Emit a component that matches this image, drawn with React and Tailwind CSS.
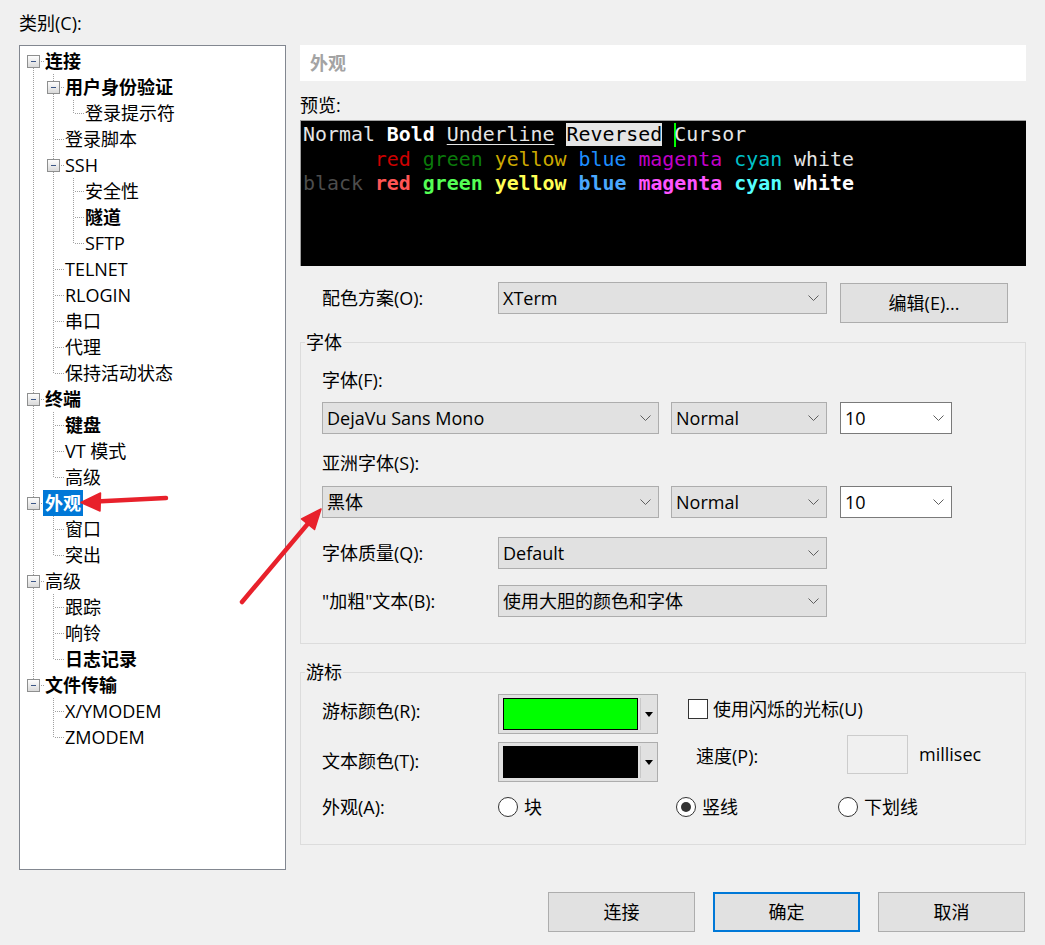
import React from 'react';

const tree = [
  { t: '连接', b: true, c: [
    { t: '用户身份验证', b: true, c: [{ t: '登录提示符' }] },
    { t: '登录脚本' },
    { t: 'SSH', c: [{ t: '安全性' }, { t: '隧道', b: true }, { t: 'SFTP' }] },
    { t: 'TELNET' }, { t: 'RLOGIN' }, { t: '串口' }, { t: '代理' }, { t: '保持活动状态' },
  ] },
  { t: '终端', b: true, c: [{ t: '键盘', b: true }, { t: 'VT 模式' }, { t: '高级' }] },
  { t: '外观', b: true, sel: true, c: [{ t: '窗口' }, { t: '突出' }] },
  { t: '高级', c: [{ t: '跟踪' }, { t: '响铃' }, { t: '日志记录', b: true }] },
  { t: '文件传输', b: true, c: [{ t: 'X/YMODEM' }, { t: 'ZMODEM' }] },
];

function flatten(nodes, level, anc, out) {
  nodes.forEach((n, i) => {
    const isLast = i === nodes.length - 1;
    const isFirstRoot = level === 0 && i === 0;
    out.push({ n, level, anc, isLast, isFirstRoot });
    if (n.c) flatten(n.c, level + 1, [...anc, isLast], out);
  });
  return out;
}

const LINE = '#a0a0a0';

function VCell() {
  return (
    <svg width="20" height="26" className="block shrink-0" shapeRendering="crispEdges">
      <line x1="8.5" y1="0" x2="8.5" y2="26" stroke={LINE} strokeDasharray="1 1" />
    </svg>
  );
}

function EmptyCell() {
  return <div className="w-[20px] h-[26px] shrink-0" />;
}

function NodeCell({ top, bottom, expander }) {
  return (
    <svg width="20" height="26" className="block shrink-0" shapeRendering="crispEdges">
      <defs>
        <linearGradient id="exg" x1="0" y1="0" x2="0" y2="1">
          <stop offset="0" stopColor="#ffffff" />
          <stop offset="1" stopColor="#d8d8d8" />
        </linearGradient>
      </defs>
      {top && <line x1="8.5" y1="0" x2="8.5" y2="14" stroke={LINE} strokeDasharray="1 1" />}
      {bottom && <line x1="8.5" y1="14" x2="8.5" y2="26" stroke={LINE} strokeDasharray="1 1" />}
      <line x1="10" y1="13.5" x2="20" y2="13.5" stroke={LINE} strokeDasharray="1 1" />
      {expander && (
        <g>
          <rect x="2.5" y="7.5" width="12" height="12" fill="url(#exg)" stroke="#8e8f8f" />
          <rect x="6" y="13" width="5" height="1" fill="#3b5686" />
        </g>
      )}
    </svg>
  );
}

function Tree() {
  const rows = flatten(tree, 0, [], []);
  return (
    <div className="flex flex-col pl-[5px]">
      {rows.map((r, idx) => (
        <div key={idx} className="flex h-[26px] items-center">
          {r.anc.map((last, k) => (last ? <EmptyCell key={k} /> : <VCell key={k} />))}
          <NodeCell top={!r.isFirstRoot} bottom={!r.isLast} expander={!!r.n.c} />
          <span
            className={`ml-[-2px] h-[26px] px-[2px] leading-[26px] whitespace-nowrap ${r.n.b ? 'font-bold' : ''} ${r.n.sel ? 'bg-[#0078d7] text-white' : 'text-black'}`}
          >
            {r.n.t}
          </span>
        </div>
      ))}
    </div>
  );
}

function Chevron() {
  return (
    <svg width="11" height="7" className="block shrink-0">
      <polyline points="0.5,0.5 5.5,5.5 10.5,0.5" fill="none" stroke="#5f5f5f" strokeWidth="1" />
    </svg>
  );
}

function Combo({ className, text, white }) {
  return (
    <div
      className={`flex h-[32px] shrink-0 items-center justify-between border pl-[4px] pr-[7px] ${white ? 'border-[#7a7a7a] bg-white' : 'border-[#adadad] bg-[#e1e1e1]'} ${className}`}
    >
      <span className="whitespace-nowrap leading-[24px]">{text}</span>
      <Chevron />
    </div>
  );
}

function ColorPick({ swatch }) {
  return (
    <div className="flex h-[40px] w-[160px] shrink-0 border border-[#adadad] bg-[#e1e1e1] pl-[4px] pt-[3px] pb-[3px]">
      <div className={`h-[32px] w-[135px] border border-black ${swatch}`} />
      <div className="ml-[2px] h-full w-[1px] bg-[#c8c8c8]" />
      <div className="flex flex-1 items-center justify-center">
        <svg width="8" height="5" className="block">
          <polygon points="0,0 8,0 4,5" fill="#000" />
        </svg>
      </div>
    </div>
  );
}

function Radio({ checked }) {
  return (
    <div className="flex h-[20px] w-[20px] shrink-0 items-center justify-center rounded-full border border-[#333333] bg-white">
      {checked && <div className="h-[10px] w-[10px] rounded-full bg-[#333333]" />}
    </div>
  );
}

function Btn({ children, primary, className }) {
  return (
    <div
      className={`flex h-[40px] items-center justify-center bg-[#e1e1e1] ${primary ? 'border-2 border-[#0078d7]' : 'border border-[#adadad]'} ${className}`}
    >
      {children}
    </div>
  );
}

function Preview() {
  return (
    <div className="h-[146px] overflow-hidden border-t border-l border-[#a0a0a0] bg-black pl-[2px] pt-[2px] font-['DejaVu_Sans_Mono',monospace] text-[19.9px] leading-[24.5px] whitespace-pre text-[#e5e5e5]">
      <div>
        <span>Normal </span>
        <span className="font-bold text-white">Bold</span>
        <span> </span>
        <span className="underline underline-offset-[3px]">Underline</span>
        <span> </span>
        <span className="bg-[#e5e5e5] text-black">Reversed</span>
        <span> </span>
        <span className="inline-block h-[24px] w-[2px] mr-[-2px] align-top bg-[#00ff00]" />
        <span>Cursor</span>
      </div>
      <div>
        <span>      </span>
        <span className="text-[#cd0000]">red</span> <span className="text-[#0b7a0b]">green</span>{' '}
        <span className="text-[#cdaa00]">yellow</span> <span className="text-[#1e8fff]">blue</span>{' '}
        <span className="text-[#c000c8]">magenta</span> <span className="text-[#00c0c8]">cyan</span>{' '}
        <span className="text-[#e5e5e5]">white</span>
      </div>
      <div>
        <span className="text-[#4d4d4d]">black</span>{' '}
        <span className="font-bold text-[#ff5555]">red</span> <span className="font-bold text-[#55ff55]">green</span>{' '}
        <span className="font-bold text-[#ffff55]">yellow</span> <span className="font-bold text-[#4aa8ff]">blue</span>{' '}
        <span className="font-bold text-[#ff55ff]">magenta</span> <span className="font-bold text-[#55ffff]">cyan</span>{' '}
        <span className="font-bold text-white">white</span>
      </div>
    </div>
  );
}

export default function App() {
  return (
    <div className="relative h-[945px] w-[1045px] overflow-hidden bg-[#f0f0f0] font-['Open_Sans','Noto_Sans_CJK_SC',sans-serif] text-[18px] text-black">
      <div className="flex pl-[19px]">
        {/* left */}
        <div className="flex w-[267px] shrink-0 flex-col">
          <div className="flex h-[45px] items-center leading-[24px]">类别(C):</div>
          <div className="h-[825px] border border-[#828790] bg-white pt-[2px]">
            <Tree />
          </div>
        </div>
        {/* right */}
        <div className="ml-[14px] flex w-[726px] shrink-0 flex-col pt-[45px]">
          <div className="flex h-[36px] items-center bg-white pl-[10px] font-bold text-[#a3a3a3]">外观</div>
          <div className="h-[39px] pt-[12px] leading-[24px]">预览:</div>
          <Preview />
          <div className="mt-[16px] flex items-start">
            <div className="flex h-[32px] w-[198px] shrink-0 items-center pl-[22px]">配色方案(O):</div>
            <Combo className="w-[329px]" text="XTerm" />
            <Btn className="ml-[13px] mt-[1px] w-[168px]">编辑(E)...</Btn>
          </div>

          <fieldset className="m-0 mt-[7px] border border-[#dcdcdc] p-0">
            <legend className="ml-[4px] px-[1px] leading-[24px]">字体</legend>
            <div className="pl-[21px] pt-[14px] pb-[26px]">
              <div className="h-[24px] leading-[24px]">字体(F):</div>
              <div className="mt-[10px] flex">
                <Combo className="w-[337px]" text="DejaVu Sans Mono" />
                <Combo className="ml-[12px] w-[156px]" text="Normal" />
                <Combo className="ml-[13px] w-[112px]" text="10" white />
              </div>
              <div className="mt-[17px] h-[24px] leading-[24px]">亚洲字体(S):</div>
              <div className="mt-[11px] flex">
                <Combo className="w-[337px]" text="黑体" />
                <Combo className="ml-[12px] w-[156px]" text="Normal" />
                <Combo className="ml-[13px] w-[112px]" text="10" white />
              </div>
              <div className="mt-[19px] flex items-center">
                <div className="w-[176px] shrink-0">字体质量(Q):</div>
                <Combo className="w-[329px]" text="Default" />
              </div>
              <div className="mt-[16px] flex items-center">
                <div className="w-[176px] shrink-0">"加粗"文本(B):</div>
                <Combo className="w-[329px]" text="使用大胆的颜色和字体" />
              </div>
            </div>
          </fieldset>

          <fieldset className="m-0 mt-[16px] border border-[#dcdcdc] p-0">
            <legend className="ml-[4px] px-[1px] leading-[24px]">游标</legend>
            <div className="pl-[21px] pt-[10px] pb-[25px]">
              <div className="flex items-start">
                <div className="flex flex-col">
                  <div className="flex h-[40px] items-center">
                    <div className="w-[176px] shrink-0 pb-[6px]">游标颜色(R):</div>
                    <ColorPick swatch="bg-[#00ff00]" />
                  </div>
                  <div className="mt-[8px] flex h-[40px] items-center">
                    <div className="w-[176px] shrink-0 pb-[2px]">文本颜色(T):</div>
                    <ColorPick swatch="bg-black" />
                  </div>
                </div>
                <div className="ml-[30px] flex flex-col">
                  <div className="mt-[3px] flex h-[24px] items-center">
                    <div className="h-[20px] w-[20px] shrink-0 border border-[#333333] bg-white" />
                    <span className="ml-[5px] whitespace-nowrap">使用闪烁的光标(U)</span>
                  </div>
                  <div className="mt-[14px] flex items-center">
                    <span className="ml-[8px] w-[151px] shrink-0 pt-[3px]">速度(P):</span>
                    <div className="h-[39px] w-[61px] shrink-0 border border-[#cccccc] bg-[#f0f0f0]" />
                    <span className="ml-[11px]">millisec</span>
                  </div>
                </div>
              </div>
              <div className="mt-[13px] flex h-[24px] items-center">
                <div className="w-[176px] shrink-0">外观(A):</div>
                <div className="flex w-[178px] shrink-0 items-center">
                  <Radio />
                  <span className="ml-[6px]">块</span>
                </div>
                <div className="flex w-[162px] shrink-0 items-center">
                  <Radio checked />
                  <span className="ml-[6px]">竖线</span>
                </div>
                <div className="flex items-center">
                  <Radio />
                  <span className="ml-[6px]">下划线</span>
                </div>
              </div>
            </div>
          </fieldset>
        </div>
      </div>

      <div className="mt-[22px] flex justify-end gap-[18px] pr-[20px]">
        <Btn className="w-[147px]">连接</Btn>
        <Btn className="w-[147px]" primary>确定</Btn>
        <Btn className="w-[147px]">取消</Btn>
      </div>

      <svg className="pointer-events-none absolute left-0 top-0" width="1045" height="945">
        <line x1="166" y1="498" x2="96" y2="501.5" stroke="#e8212b" strokeWidth="4.5" strokeLinecap="round" />
        <polygon points="81,502.5 100.5,493 100,511" fill="#e8212b" stroke="#e8212b" strokeWidth="1.5" strokeLinejoin="round" />
        <line x1="242" y1="602" x2="311" y2="520" stroke="#e8212b" strokeWidth="4.5" strokeLinecap="round" />
        <polygon points="321,509 301.5,519 314.5,529.5" fill="#e8212b" stroke="#e8212b" strokeWidth="1.5" strokeLinejoin="round" />
      </svg>
    </div>
  );
}
